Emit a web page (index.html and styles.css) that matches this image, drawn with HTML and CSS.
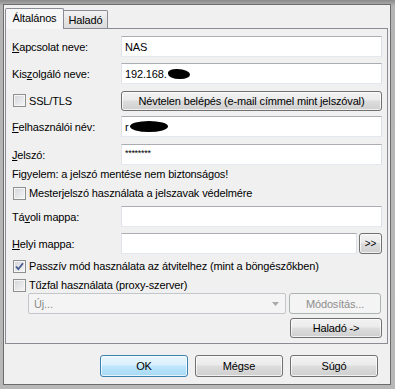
FILE: index.html
```html
<!DOCTYPE html>
<html lang="hu">
<head>
  <meta charset="UTF-8">
  <title>Kapcsolat</title>
  <link rel="stylesheet" href="styles.css">
</head>
<body>
  <div class="dialog">
    <div class="tabs">
      <div class="tab tab-active">Általános</div>
      <div class="tab">Haladó</div>
    </div>
    <div class="panel">
      <div class="row row-first">
        <span class="label"><u>K</u>apcsolat neve:</span>
        <div class="field">NAS</div>
      </div>
      <div class="row gap6">
        <span class="label">Kis<u>z</u>olgáló neve:</span>
        <div class="field">192.168.<span class="blot blot-ip"></span></div>
      </div>
      <div class="row gap6">
        <span class="label check"><span class="box"></span>SSL/TLS</span>
        <button class="btn btn-wide">Névtelen belépés (e-mail címmel mint jelszóval)</button>
      </div>
      <div class="row gap5">
        <span class="label"><u>F</u>elhasználói név:</span>
        <div class="field">r<span class="blot blot-user"></span></div>
      </div>
      <div class="row gap7">
        <span class="label"><u>J</u>elszó:</span>
        <div class="field"><span class="stars">********</span></div>
      </div>
      <div class="row row-text gap2">Figyelem: a jelszó mentése nem biztonságos!</div>
      <div class="row row-check gap5">
        <span class="check"><span class="box"></span>Mesterjelszó használata a jelszavak védelmére</span>
      </div>
      <div class="row gap6">
        <span class="label">Tá<u>v</u>oli mappa:</span>
        <div class="field"></div>
      </div>
      <div class="row gap6">
        <span class="label"><u>H</u>elyi mappa:</span>
        <div class="field"></div>
        <button class="btn btn-browse">&gt;&gt;</button>
      </div>
      <div class="row row-check gap5">
        <span class="check">
          <span class="box">
            <svg width="11" height="11" viewBox="0 0 11 11"><path d="M2 5.5 L4.3 8.2 L9 2.2" fill="none" stroke="#44598f" stroke-width="1.8"/></svg>
          </span>Passzív mód használata az átvitelhez (mint a böngészőkben)
        </span>
      </div>
      <div class="row row-check gap5">
        <span class="check"><span class="box"></span>Tűzfal használata (proxy-szerver)</span>
      </div>
      <div class="row gap1">
        <div class="combo">
          <span>Új...</span>
          <svg class="combo-arrow" width="7" height="4" viewBox="0 0 7 4"><path d="M0 0 H7 L3.5 4 Z" fill="#a9a9a9"/></svg>
        </div>
        <button class="btn btn-side" disabled>Módosítás...</button>
      </div>
      <div class="row row-end gap4">
        <button class="btn btn-side btn-short">Haladó -&gt;</button>
      </div>
    </div>
    <div class="footer">
      <button class="btn btn-footer btn-default">OK</button>
      <button class="btn btn-footer">Mégse</button>
      <button class="btn btn-footer">Súgó</button>
    </div>
  </div>
</body>
</html>
```

FILE: styles.css
```css
* {
  margin: 0;
  padding: 0;
  box-sizing: border-box;
}
body {
  background: linear-gradient(#8a8a8a, #b4b4b4 6px, #b8b8b8);
  font-family: "Liberation Sans", Arial, sans-serif;
  font-size: 11px;
  letter-spacing: -0.15px;
  color: #000;
}
.dialog {
  margin: 4px 4px 4px 3px;
  height: 381px;
  border: 1px solid #6c6c6c;
  background: #f0f0f0;
}
.tabs {
  display: flex;
  align-items: flex-end;
  margin-left: 1px;
  padding-top: 3px;
}
.tab {
  height: 18px;
  width: 44px;
  border: 1px solid #898c95;
  border-left: none;
  border-bottom: none;
  border-radius: 0 2px 0 0;
  background: linear-gradient(#f3f3f3, #e6e6e6 50%, #dcdcdc);
  display: flex;
  align-items: center;
  justify-content: center;
}
.tab-active {
  position: relative;
  z-index: 1;
  width: 59px;
  height: 21px;
  margin-bottom: -1px;
  border-left: 1px solid #898c95;
  border-radius: 2px 2px 0 0;
  background: #f6f6f6;
  padding-bottom: 2px;
}
.panel {
  margin: 0 2px 0 1px;
  height: 316px;
  border: 1px solid #898c95;
  background: #f0f0f0;
  padding: 7px 5px 0 6px;
}
.row {
  display: flex;
  align-items: center;
  height: 21px;
}
.row-text {
  height: 14px;
}
.row-check {
  height: 14px;
}
.row-end {
  justify-content: flex-end;
  height: 20px;
}
.gap1 { margin-top: 1px; }
.gap2 { margin-top: 2px; }
.gap4 { margin-top: 4px; }
.gap5 { margin-top: 5px; }
.gap6 { margin-top: 6px; }
.gap7 { margin-top: 7px; }
.label {
  width: 109px;
  flex: none;
}
.field {
  flex: 1;
  height: 21px;
  display: flex;
  align-items: center;
  padding-left: 3px;
  background: #fff;
  border: 1px solid;
  border-color: #abadb3 #dbdfe6 #e3e9ef #e2e3ea;
}
.blot {
  display: inline-block;
  background: #000;
}
.blot-ip {
  width: 22px;
  height: 10px;
  border-radius: 40% 60% 45% 55%;
  margin-left: 1px;
}
.blot-user {
  width: 38px;
  height: 11px;
  border-radius: 50%;
  margin-left: 1px;
}
.stars {
  font-size: 9px;
  letter-spacing: -0.3px;
  margin-top: -3px;
}
.check {
  display: flex;
  align-items: center;
  gap: 3px;
}
.box {
  width: 13px;
  height: 13px;
  margin-left: 1px;
  flex: none;
  border: 1px solid #8e8f8f;
  background: linear-gradient(135deg, #d2d4d8, #f7f7f7);
  box-shadow: inset 0 0 0 1px #f6f6f6;
  display: flex;
  align-items: center;
  justify-content: center;
}
.btn {
  font-family: inherit;
  font-size: 11px;
  letter-spacing: -0.15px;
  color: #000;
  height: 21px;
  border: 1px solid #707070;
  border-radius: 3px;
  background: linear-gradient(#f2f2f2, #ebebeb 45%, #dddddd 50%, #cfcfcf);
  box-shadow: inset 0 0 0 1px rgba(255, 255, 255, 0.7);
}
.btn-wide {
  flex: 1;
  height: 20px;
}
.btn-browse {
  width: 23px;
  margin-left: 2px;
  font-size: 10px;
}
.btn-side {
  flex: none;
  width: 92px;
  margin-left: 3px;
}
.btn-short {
  height: 20px;
}
.btn[disabled] {
  color: #8d8d8d;
  border-color: #adb2b5;
  background: #f4f4f4;
  box-shadow: none;
}
.combo {
  width: 258px;
  height: 21px;
  margin-left: 16px;
  border: 1px solid #c3c6ca;
  border-radius: 2px;
  background: #f4f4f4;
  color: #8d8d8d;
  display: flex;
  align-items: center;
  justify-content: space-between;
  padding: 0 6px 0 5px;
}
.footer {
  display: flex;
  justify-content: flex-end;
  gap: 7px;
  padding-right: 12px;
  margin-top: 11px;
}
.btn-footer {
  width: 88px;
  height: 22px;
}
.btn-default {
  border-color: #3c7fb1;
  background: linear-gradient(#eaf6fd, #d9f0fc 45%, #bee6fd 50%, #a7d9f5);
}
```
